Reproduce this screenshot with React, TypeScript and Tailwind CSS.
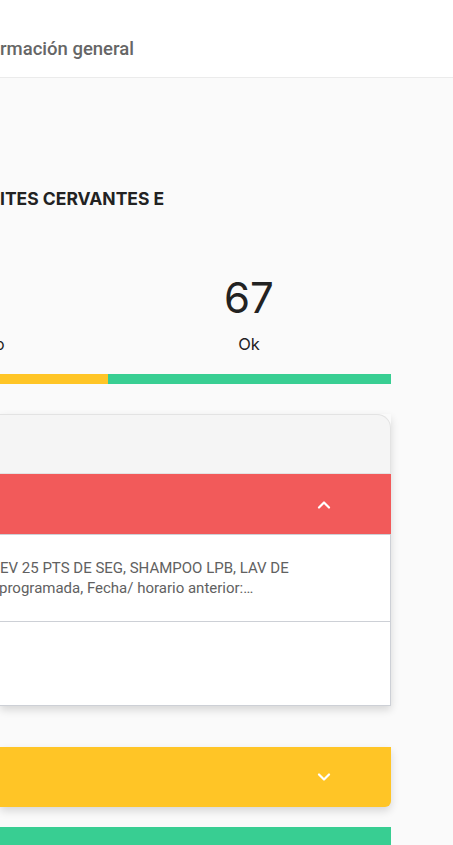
import React from "react";

function Chevron({ up }: { up?: boolean }) {
  return (
    <svg width="14" height="9" viewBox="0 0 14 9" fill="none">
      <polyline
        points={up ? "2,7.5 7,2.5 12,7.5" : "2,1.5 7,6.5 12,1.5"}
        stroke="#ffffff"
        strokeWidth="2.2"
        strokeLinecap="round"
        strokeLinejoin="round"
      />
    </svg>
  );
}

export default function App() {
  return (
    <div className="min-h-screen w-[453px] overflow-hidden bg-[#fafafa] font-['Roboto',sans-serif]">
      <header className="h-[78px] border-b border-[#ebebeb] bg-white pt-[36px]">
        <div className="whitespace-nowrap text-[18.5px] font-medium leading-[26px] text-[#666666]">
          rmación general
        </div>
      </header>

      <main className="w-[391px]">
        <h1 className="whitespace-nowrap pt-[109px] font-['Inter',sans-serif] text-[17.5px] font-bold leading-[24px] text-[#222222]">
          ITES CERVANTES E
        </h1>

        <div className="mt-[63px] flex font-['Inter',sans-serif] text-[#222222]">
          <div className="flex w-[107px] items-end overflow-hidden">
            <span className="-ml-[5px] text-[16px] leading-[24px]">o</span>
          </div>
          <div className="flex w-[284px] flex-col items-center">
            <div className="text-[42px] leading-[48px]">67</div>
            <div className="mt-[10px] text-[16.5px] leading-[24px]">Ok</div>
          </div>
        </div>

        <div className="mt-[18px] flex h-[10px]">
          <div className="w-[108px] bg-[#ffc526]" />
          <div className="flex-1 bg-[#38ce92]" />
        </div>

        <div className="mt-[30px] shadow-[0_4px_8px_rgba(0,0,0,0.14)]">
          <div className="h-[60px] rounded-tr-[14px] border-r border-t border-b border-[#e3e3e3] bg-[#f5f5f5]" />
          <div className="flex h-[60px] items-center justify-end bg-[#f25a5a] pr-[60px]">
            <Chevron up />
          </div>
          <div className="h-[87px] border-r border-t border-[#cdd0d6] bg-white pt-[23px] text-[15px] leading-[20px] text-[#616161]">
            <div className="whitespace-nowrap">EV 25 PTS DE SEG, SHAMPOO LPB, LAV DE</div>
            <div className="-ml-[1px] whitespace-nowrap">programada, Fecha/ horario anterior:…</div>
          </div>
          <div className="h-[85px] border-b border-r border-t border-[#cdd0d6] bg-white" />
        </div>

        <div className="mt-[41px] flex h-[60px] items-center justify-end rounded-br-[6px] bg-[#ffc526] pr-[60px] shadow-[0_4px_8px_rgba(0,0,0,0.14)]">
          <Chevron />
        </div>

        <div className="mt-[20px] h-[60px] bg-[#38ce92]" />
      </main>
    </div>
  );
}
